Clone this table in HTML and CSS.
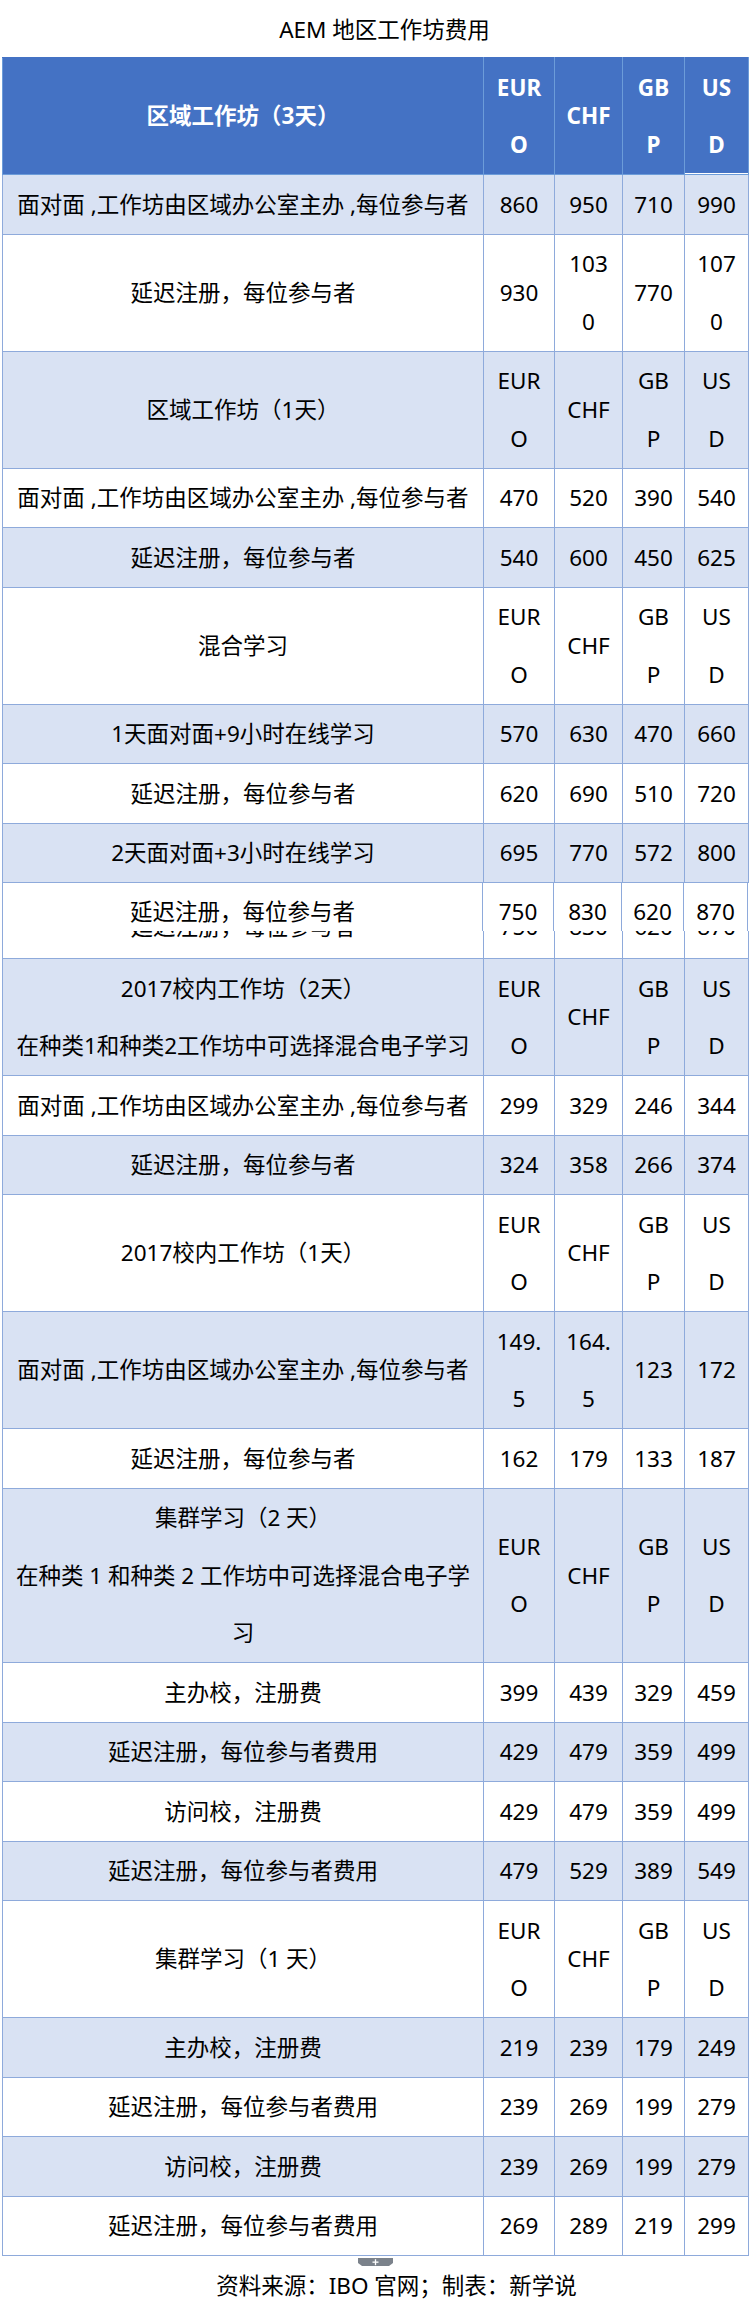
FILE: index.html
```html
<!DOCTYPE html>
<html lang="zh-CN">
<head>
<meta charset="utf-8">
<title>AEM 地区工作坊费用</title>
<link rel="stylesheet" href="styles.css">
</head>
<body>
<div class="page">
  <div class="title">AEM 地区工作坊费用</div>
  <div class="table-wrap">
    <table class="fees">
      <colgroup>
        <col class="c-name"><col class="c-eur"><col class="c-chf"><col class="c-gbp"><col class="c-usd">
      </colgroup>
      <thead>
        <tr><th>区域工作坊（3天）</th><th>EURO</th><th>CHF</th><th>GBP</th><th class="last">USD</th></tr>
      </thead>
      <tbody>
        <tr><td>面对面 ,工作坊由区域办公室主办 ,每位参与者</td><td>860</td><td>950</td><td>710</td><td>990</td></tr>
        <tr><td>延迟注册，每位参与者</td><td>930</td><td>1030</td><td>770</td><td>1070</td></tr>
        <tr><td>区域工作坊（1天）</td><td>EURO</td><td>CHF</td><td>GBP</td><td>USD</td></tr>
        <tr><td>面对面 ,工作坊由区域办公室主办 ,每位参与者</td><td>470</td><td>520</td><td>390</td><td>540</td></tr>
        <tr><td>延迟注册，每位参与者</td><td>540</td><td>600</td><td>450</td><td>625</td></tr>
        <tr><td>混合学习</td><td>EURO</td><td>CHF</td><td>GBP</td><td>USD</td></tr>
        <tr><td>1天面对面+9小时在线学习</td><td>570</td><td>630</td><td>470</td><td>660</td></tr>
        <tr><td>延迟注册，每位参与者</td><td>620</td><td>690</td><td>510</td><td>720</td></tr>
        <tr><td>2天面对面+3小时在线学习</td><td>695</td><td>770</td><td>572</td><td>800</td></tr>
        <tr class="glitch">
          <td class="has-slice">延迟注册，每位参与者
            <div class="slice">
              <span class="s-name">延迟注册，每位参与者</span><span class="s-eur">750</span><span class="s-chf">830</span><span class="s-gbp">620</span><span class="s-usd">870</span>
            </div>
          </td><td>750</td><td>830</td><td>620</td><td>870</td>
        </tr>
        <tr><td>2017校内工作坊（2天）<br>在种类1和种类2工作坊中可选择混合电子学习</td><td>EURO</td><td>CHF</td><td>GBP</td><td>USD</td></tr>
        <tr><td>面对面 ,工作坊由区域办公室主办 ,每位参与者</td><td>299</td><td>329</td><td>246</td><td>344</td></tr>
        <tr><td>延迟注册，每位参与者</td><td>324</td><td>358</td><td>266</td><td>374</td></tr>
        <tr><td>2017校内工作坊（1天）</td><td>EURO</td><td>CHF</td><td>GBP</td><td>USD</td></tr>
        <tr><td>面对面 ,工作坊由区域办公室主办 ,每位参与者</td><td>149.5</td><td>164.5</td><td>123</td><td>172</td></tr>
        <tr><td>延迟注册，每位参与者</td><td>162</td><td>179</td><td>133</td><td>187</td></tr>
        <tr><td>集群学习（2 天）<br>在种类 1 和种类 2 工作坊中可选择混合电子学习</td><td>EURO</td><td>CHF</td><td>GBP</td><td>USD</td></tr>
        <tr><td>主办校，注册费</td><td>399</td><td>439</td><td>329</td><td>459</td></tr>
        <tr><td>延迟注册，每位参与者费用</td><td>429</td><td>479</td><td>359</td><td>499</td></tr>
        <tr><td>访问校，注册费</td><td>429</td><td>479</td><td>359</td><td>499</td></tr>
        <tr><td>延迟注册，每位参与者费用</td><td>479</td><td>529</td><td>389</td><td>549</td></tr>
        <tr><td>集群学习（1 天）</td><td>EURO</td><td>CHF</td><td>GBP</td><td>USD</td></tr>
        <tr><td>主办校，注册费</td><td>219</td><td>239</td><td>179</td><td>249</td></tr>
        <tr><td>延迟注册，每位参与者费用</td><td>239</td><td>269</td><td>199</td><td>279</td></tr>
        <tr><td>访问校，注册费</td><td>239</td><td>269</td><td>199</td><td>279</td></tr>
        <tr><td>延迟注册，每位参与者费用</td><td>269</td><td>289</td><td>219</td><td>299</td></tr>
      </tbody>
    </table>
  </div>
  <div class="expander">
    <svg width="35" height="8" viewBox="0 0 35 8" aria-hidden="true">
      <polygon points="0,0 35,0 35,5 31,8 4,8 0,5" fill="#7b828b"/>
      <rect x="14.5" y="3.5" width="6" height="1.3" fill="#fff"/>
      <rect x="16.85" y="1.2" width="1.3" height="6" fill="#fff"/>
    </svg>
  </div>
  <div class="source">资料来源：IBO 官网；制表：新学说</div>
</div>
</body>
</html>
```

FILE: styles.css
```css
html, body {
  margin: 0;
  padding: 0;
  background: #ffffff;
}

body {
  font-family: "Noto Sans", "Noto Sans CJK SC", sans-serif;
  font-size: 22.5px;
  color: #000000;
}

.page {
  width: 752px;
}

.title {
  padding: 3px 0 0 17px;
  line-height: 54px;
  text-align: center;
}

.table-wrap {
  padding-left: 2px;
}

.fees {
  border-collapse: collapse;
  table-layout: fixed;
  width: 746px;
}

.c-name { width: 481px; }
.c-eur { width: 71px; }
.c-chf { width: 68px; }
.c-gbp { width: 62px; }
.c-usd { width: 64px; }

.fees th,
.fees td {
  border: 1px solid #8eaadb;
  padding: 0.5px 10.5px;
  line-height: 57.5px;
  text-align: center;
  vertical-align: middle;
  word-break: break-all;
  font-weight: normal;
}

.fees th {
  background: #4472c4;
  color: #ffffff;
  font-weight: bold;
  border-color: #6c9cd9;
  border-top-color: #4472c4;
}

.fees th.last {
  box-shadow: inset 0 -1px 0 #ffffff;
}

.fees tbody tr:nth-child(odd) td {
  background: #d9e2f3;
}

.fees tr.glitch td {
  padding-top: 15px;
  padding-bottom: 2.5px;
}

.has-slice {
  position: relative;
}

.slice {
  position: absolute;
  top: 0;
  left: -1px;
  width: 746px;
  height: 48px;
  display: flex;
  background: #ffffff;
  overflow: hidden;
  border-left: 1px solid #8eaadb;
}

.slice span {
  flex: none;
  height: 48px;
  line-height: 57.5px;
  text-align: center;
  border-right: 1px solid #8eaadb;
  box-sizing: border-box;
}

.slice .s-name { width: 480px; }
.slice .s-eur { width: 71px; }
.slice .s-chf { width: 68px; }
.slice .s-gbp { width: 62px; }
.slice .s-usd { width: 64px; }

.expander {
  display: flex;
  justify-content: center;
  padding-top: 2px;
  height: 8px;
  padding-right: 2px;
}

.expander svg {
  display: block;
}

.source {
  padding-left: 41px;
  line-height: 40px;
  text-align: center;
}
```
